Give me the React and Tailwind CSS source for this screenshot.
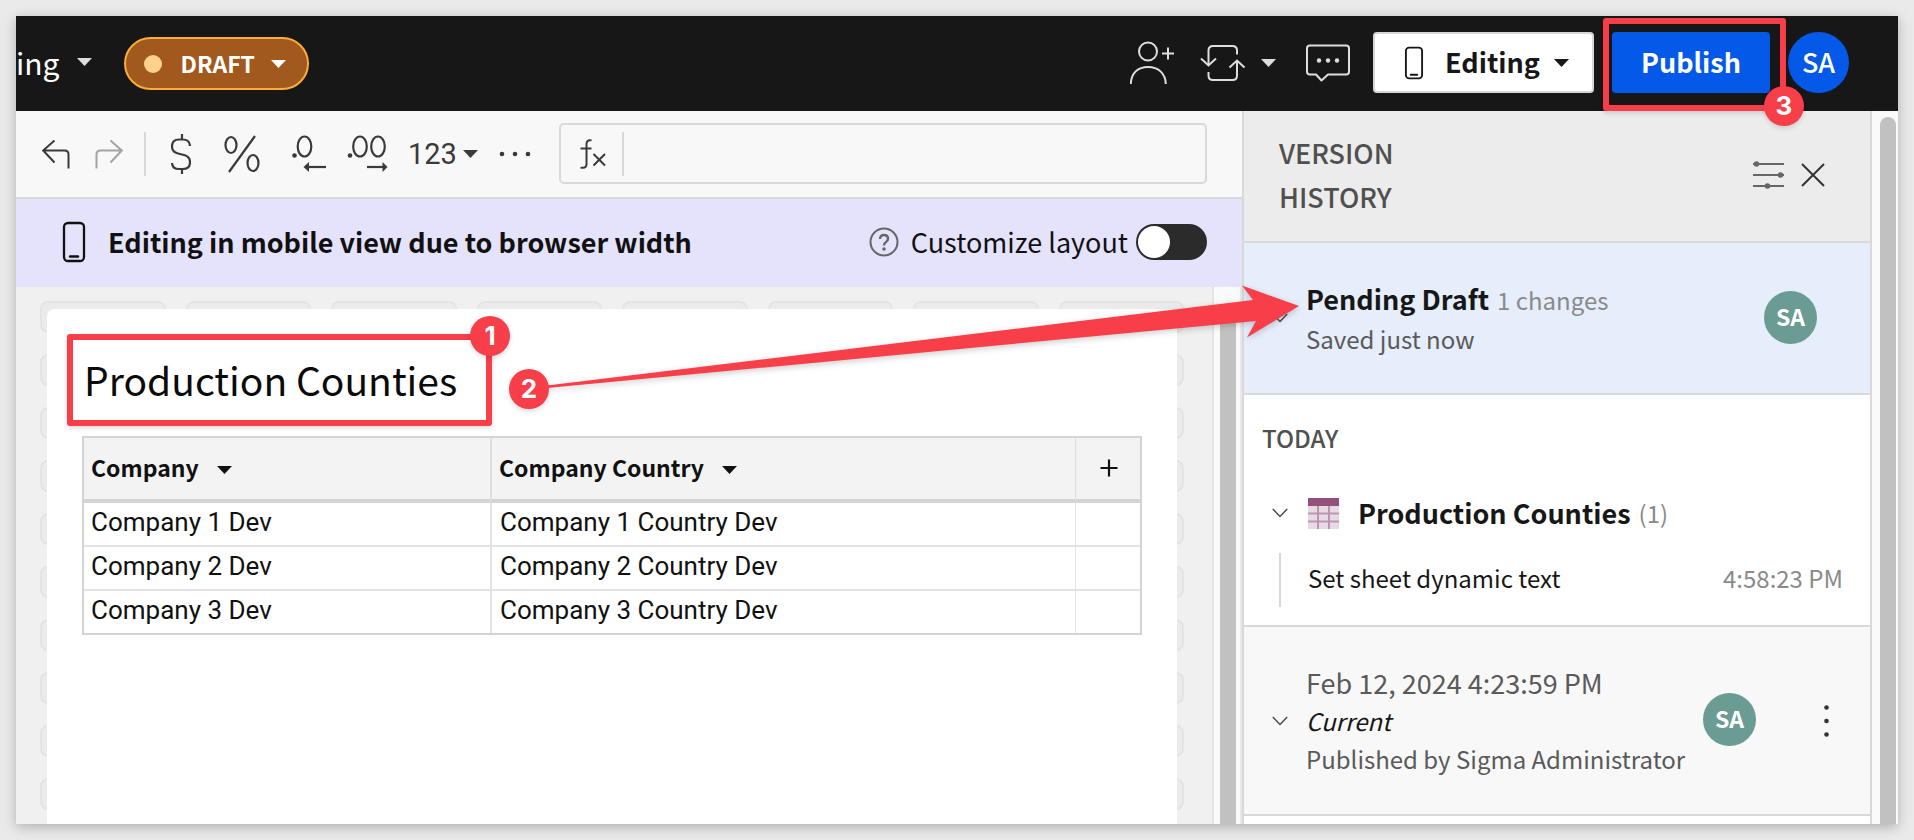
const SANS = "font-['Noto_Sans_CJK_SC','Open_Sans',sans-serif]";

const ROWS = [
  ["Company 1 Dev", "Company 1 Country Dev"],
  ["Company 2 Dev", "Company 2 Country Dev"],
  ["Company 3 Dev", "Company 3 Country Dev"],
];

function Caret({ className = "" }) {
  return (
    <svg aria-hidden="true" width="15" height="8" viewBox="0 0 15 8" className={"shrink-0 " + className}>
      <path d="M0 0h15L7.500 8z" fill="currentColor" />
    </svg>
  );
}

function Phone({ width, height, sw }) {
  return (
    <svg aria-hidden="true" width={width} height={height} viewBox="0 0 24 42" fill="none" stroke="currentColor" strokeWidth={sw} className="shrink-0">
      <rect x="2" y="2" width="20" height="38" rx="4" />
      <path d="M8 35.500h8" strokeWidth="2.400" strokeLinecap="round" />
    </svg>
  );
}

function Chevron() {
  return (
    <svg aria-hidden="true" width="16" height="10" viewBox="0 0 16 10" fill="none" stroke="#4b4b4b" strokeWidth="1.500" className="shrink-0">
      <path d="M0.800 1L8 8.500L15.200 1" />
    </svg>
  );
}

function Marker({ children, className }) {
  return (
    <span
      className={
        "absolute z-20 flex size-10 items-center justify-center rounded-full bg-[#f73e49] font-['Inter','Liberation_Sans',sans-serif] text-[26px] leading-none font-bold text-white shadow-[0_2px_5px_rgba(0,0,0,0.15)] " +
        className
      }
    >
      {children}
    </span>
  );
}

function Avatar() {
  return (
    <span className="mb-0.5 flex size-[53px] shrink-0 items-center justify-center rounded-full bg-[#6a9c93] pb-0.5 text-[23px] font-bold text-white">
      SA
    </span>
  );
}

function TopBar() {
  return (
    <header className="flex h-[95px] shrink-0 items-center bg-[#171717] pb-0.5 text-[#dedede]">
      <button type="button" className="flex items-center gap-[18px] pb-0.5 text-[30px] leading-10 text-white">
        ing
        <Caret className="text-[#dedede]" />
      </button>
      <button
        type="button"
        className="mt-0.5 ml-8 flex h-[53px] w-[185px] items-center rounded-full border-2 border-[#fbad3c] bg-[#a1591e] pl-[18px] text-[23px] font-bold text-white"
      >
        <span className="mr-[18px] size-[18px] rounded-full bg-[#ffd28c]" />
        DRAFT
        <Caret className="ml-4" />
      </button>

      <div className="ml-auto flex items-center pr-[49px]">
        <button type="button" aria-label="Share" className="mr-[26px]">
          <svg width="44" height="44" viewBox="0 0 44 44" fill="none" stroke="currentColor" strokeWidth="2">
            <circle cx="18" cy="10.500" r="9" />
            <path d="M0.800 43C1 32 8 26 18 26s17.500 6 17.800 17M38 6.500v12M32 12.500h12" />
          </svg>
        </button>
        <button type="button" aria-label="Refresh" className="flex items-center gap-[15px]">
          <svg width="46" height="38" viewBox="0 0 46 38" fill="none" stroke="currentColor" strokeWidth="2">
            <path d="M8.500 21V6.500Q8.500 2 13 2H32.500Q37 2 37 6.500V10.500" />
            <path d="M1 14.500l7.500 7l7.500-7" />
            <path d="M8.500 28V31.500Q8.500 36 13 36H32.500Q37 36 37 31.500V17" />
            <path d="M29.500 23.500l7.500-7l7.500 7" />
          </svg>
          <Caret />
        </button>
        <button type="button" aria-label="Comments" className="mr-[23px] ml-[30px]">
          <svg width="44" height="38" viewBox="0 0 44 38" fill="none" stroke="currentColor" strokeWidth="2">
            <path d="M4 1.500H40Q43 1.500 43 4.500V27.500Q43 30.500 40 30.500H22L15.500 36.500L10 30.500H4Q1 30.500 1 27.500V4.500Q1 1.500 4 1.500z" strokeLinejoin="round" />
            <g fill="currentColor" stroke="none">
              <circle cx="13" cy="16.500" r="2.200" />
              <circle cx="22" cy="16.500" r="2.200" />
              <circle cx="31" cy="16.500" r="2.200" />
            </g>
          </svg>
        </button>
        <button
          type="button"
          className="flex h-[61px] w-[221px] items-center rounded-sm border-2 border-[#d6d6d6] bg-white pl-[29px] text-[27px] font-bold text-[#171717]"
        >
          <Phone width="20" height="34" sw="2.300" />
          <span className="ml-[21px]">Editing</span>
          <Caret className="ml-3.5" />
        </button>
        <div className="relative mx-[18px]">
          <button type="button" className="h-[61px] w-[158px] rounded-sm bg-[#0559e9] text-[27px] font-bold text-white">
            Publish
          </button>
          <span className="pointer-events-none absolute -top-3.5 -right-4 -bottom-[18px] -left-[9px] z-10 rounded-[3px] border-[6px] border-[#f73e49] shadow-[0_2px_5px_rgba(0,0,0,0.15)]" />
          <Marker className="-right-[34px] -bottom-[33px]">3</Marker>
        </div>
        <button type="button" className="size-[61px] rounded-full bg-[#0559e9] text-[27px] font-medium text-white">
          SA
        </button>
      </div>
    </header>
  );
}

function Toolbar() {
  return (
    <div className="flex h-[88px] shrink-0 items-center border-b-2 border-[#d9d9d9] bg-[#f8f8f8] pr-[35px] pb-px pl-[26px] text-[#3a3a3a]">
      <button type="button" aria-label="Undo">
        <svg width="28" height="30" viewBox="0 0 28 30" fill="none" stroke="currentColor" strokeWidth="2">
          <path d="M12.500 1.500L1.200 11.500L12.500 23.500M1.200 11.500H22.500Q26.500 11.500 26.500 15.500V29.500" />
        </svg>
      </button>
      <button type="button" aria-label="Redo" className="ml-[25px] text-[#a3a3a3]">
        <svg width="28" height="30" viewBox="0 0 28 30" fill="none" stroke="currentColor" strokeWidth="2">
          <path d="M15.500 1.500L26.800 11.500L15.500 23.500M26.800 11.500H5.500Q1.500 11.500 1.500 15.500V29.500" />
        </svg>
      </button>
      <span className="ml-[21px] h-11 w-0.5 bg-[#d9d9d9]" />
      <button type="button" aria-label="Format as currency" className="ml-[25px]">
        <svg width="20" height="40" viewBox="0 0 20 40" fill="none" stroke="currentColor" strokeWidth="2.200">
          <path d="M11 0V5.500M11 35V40M19 12Q18.500 5.500 12 5.500H8Q1 5.500 1 12.500Q1 18 7 19.500L13 21Q19 22.500 19 28Q19 35 12 35H8Q1.500 35 1 29" />
        </svg>
      </button>
      <button type="button" aria-label="Format as percent" className="ml-[33px]">
        <svg width="36" height="38" viewBox="0 0 36 38" fill="none" stroke="currentColor" strokeWidth="2.200">
          <ellipse cx="7" cy="10" rx="5.500" ry="8" />
          <ellipse cx="29" cy="28" rx="5.500" ry="8" />
          <path d="M31 1L5 37" />
        </svg>
      </button>
      <button type="button" aria-label="Decrease decimal places" className="ml-8">
        <svg width="34" height="38" viewBox="0 0 34 38" fill="none" stroke="currentColor" strokeWidth="2.200">
          <ellipse cx="12.500" cy="11.500" rx="6.800" ry="10" />
          <circle cx="2.500" cy="20.500" r="2.300" fill="currentColor" stroke="none" />
          <path d="M15 32H34" />
          <path d="M11.500 32L17 27V37z" fill="currentColor" stroke="none" />
        </svg>
      </button>
      <button type="button" aria-label="Increase decimal places" className="ml-[21px]">
        <svg width="41" height="38" viewBox="0 0 41 38" fill="none" stroke="currentColor" strokeWidth="2.200">
          <ellipse cx="13" cy="11.500" rx="6.800" ry="10" />
          <ellipse cx="31" cy="11.500" rx="6.800" ry="10" />
          <circle cx="3" cy="20.500" r="2.300" fill="currentColor" stroke="none" />
          <path d="M20 32H37" />
          <path d="M40.500 32L35.500 27V37z" fill="currentColor" stroke="none" />
        </svg>
      </button>
      <button type="button" className="ml-5 flex items-center gap-1.5 font-['Roboto',sans-serif] text-[29px] leading-8">
        123
        <Caret />
      </button>
      <button type="button" aria-label="More formats" className="ml-[21px]">
        <svg width="32" height="6" viewBox="0 0 32 6" fill="currentColor">
          <circle cx="3" cy="3" r="2.300" />
          <circle cx="16" cy="3" r="2.300" />
          <circle cx="29" cy="3" r="2.300" />
        </svg>
      </button>
      <label className="ml-7 flex h-[61px] min-w-0 flex-1 items-center rounded-[5px] border-2 border-[#d9d9d9] pl-[19px]">
        <svg role="img" aria-label="Formula" width="26" height="30" viewBox="0 0 26 30" fill="none" stroke="currentColor" strokeWidth="2" className="shrink-0">
          <path d="M11.500 1.200H10Q6.500 1.200 6.500 5V25Q6.500 28.800 3 28.800H0.500M0.500 9.500H11.500M13.500 15L25 26.500M25 15L13.500 26.500" />
        </svg>
        <span className="ml-4 h-11 w-0.5 shrink-0 bg-[#d9d9d9]" />
        <input type="text" className="h-full min-w-0 flex-1 bg-transparent px-3 text-2xl outline-none" />
      </label>
    </div>
  );
}

function Banner() {
  return (
    <div className="flex h-[88px] shrink-0 items-center bg-[#e5e3fb] pr-[35px] pb-0.5 pl-[46px] text-[27px] leading-10 text-[#111]">
      <Phone width="24" height="42" sw="2.300" />
      <strong className="ml-[22px] font-bold">Editing in mobile view due to browser width</strong>
      <svg role="img" aria-label="Help" width="30" height="30" viewBox="0 0 30 30" fill="none" stroke="#666" strokeWidth="2" className="ml-auto">
        <circle cx="15" cy="15" r="13.500" />
        <path d="M11 12Q11 8 15 8T19 11.800Q19 14 16.800 15.200Q15 16.200 15 18.500" strokeWidth="2.400" />
        <circle cx="15" cy="22" r="1.800" fill="#666" stroke="none" />
      </svg>
      <label htmlFor="customize" className="ml-3">
        Customize layout
      </label>
      <input
        id="customize"
        type="checkbox"
        role="switch"
        className="ml-2 flex h-9 w-[71px] appearance-none items-center rounded-full bg-[#2b2b2b] pl-0.5 before:size-8 before:rounded-full before:bg-white checked:justify-end checked:pr-0.5"
      />
    </div>
  );
}

function Sheet() {
  const th = "h-[65px] border-b-4 border-[#d4d4d4] bg-[#f3f3f3] p-0 pb-0.5 pl-[7px] text-left font-bold";
  return (
    <table className="mx-[35px] mt-2.5 w-[calc(100%-70px)] table-fixed border-separate border-spacing-0 border-2 border-[#d4d4d4] text-[#111]">
      <colgroup>
        <col className="w-[406px]" />
        <col />
        <col className="w-[65px]" />
      </colgroup>
      <thead className="text-[23px]">
        <tr>
          <th className={th}>
            <button type="button" className="flex items-center gap-[18px]">
              Company
              <Caret className="mt-1" />
            </button>
          </th>
          <th className={th + " border-l-2 border-l-[#dedede]"}>
            <button type="button" className="flex items-center gap-[18px]">
              Company Country
              <Caret className="mt-1" />
            </button>
          </th>
          <th className={th + " border-l border-l-[#dedede]"}>
            <button type="button" aria-label="Add column" className="ml-[17px] block">
              <svg width="18" height="18" viewBox="0 0 18 18" stroke="currentColor" strokeWidth="2.200">
                <path d="M9 0.500V17.500M0.500 9H17.500" />
              </svg>
            </button>
          </th>
        </tr>
      </thead>
      <tbody className="font-['Roboto',sans-serif] text-[26px] leading-[38px] [&_tr:last-child_td]:border-b-0 [&_td]:border-b-2 [&_td]:border-[#e3e3e3]">
        {ROWS.map(([company, country]) => (
          <tr key={company}>
            <td className="p-0 pb-1 pl-[7px]">{company}</td>
            <td className="border-l-2 p-0 pb-1 pl-2">{country}</td>
            <td className="border-l p-0" />
          </tr>
        ))}
      </tbody>
    </table>
  );
}

function Canvas() {
  return (
    <div className="flex min-h-0 flex-1">
      <div className="grid min-w-0 flex-1 grid-cols-1 grid-rows-1 overflow-hidden border-r-2 border-[#e5e5e5] bg-[#f0f0f0]">
        <div className="col-start-1 row-start-1 grid auto-rows-[32px] grid-cols-8 content-start gap-x-5 gap-y-[21px] pt-3.5 pr-7 pl-6">
          {Array.from({ length: 80 }, (_, i) => (
            <span key={i} className="rounded-lg border-2 border-[#e4e4e4] bg-[#ebebeb]" />
          ))}
        </div>
        <main className="z-10 col-start-1 row-start-1 mt-[22px] mr-[35px] ml-[31px] rounded-t-lg bg-white">
          <div className="relative mt-[25px] ml-5 flex h-[92px] w-[425px] items-center pb-0.5 pl-[17px]">
            <h1 className="text-[39px] leading-[56px] whitespace-nowrap text-[#0a0a0a]">Production Counties</h1>
            <span className="pointer-events-none absolute inset-0 rounded-[3px] border-[6px] border-[#f73e49] shadow-[0_2px_5px_rgba(0,0,0,0.15)]" />
            <Marker className="-top-[18px] -right-[18px]">1</Marker>
          </div>
          <Sheet />
        </main>
      </div>
      <div className="w-7 shrink-0 border-r-2 border-[#e8e8e8] bg-[#fafafa] pt-6 pl-1.5">
        <div className="h-full w-4 rounded-t-full bg-[#c1c1c1]" />
      </div>
    </div>
  );
}

function VersionHistory() {
  return (
    <aside className="flex w-[630px] shrink-0 flex-col border-x-2 border-[#d9d9d9] bg-white">
      <div className="flex h-[132px] shrink-0 items-center border-b-2 border-[#d9d9d9] bg-[#ececec] pr-[45px] pb-0.5 pl-[35px]">
        <h2 className="w-40 text-[27px] leading-[44px] font-medium text-[#505050]">VERSION HISTORY</h2>
        <button type="button" aria-label="Filter versions" className="ml-auto">
          <svg width="31" height="28" viewBox="0 0 31 28" fill="#666" stroke="#666" strokeWidth="2">
            <path d="M0 3H31M0 14H31M0 25H31" />
            <circle cx="3.500" cy="3" r="1.800" />
            <circle cx="27.500" cy="14" r="1.800" />
            <circle cx="14.500" cy="25" r="1.800" />
          </svg>
        </button>
        <button type="button" aria-label="Close" className="ml-[17px]">
          <svg width="24" height="24" viewBox="0 0 24 24" stroke="#333" strokeWidth="2">
            <path d="M1 1L23 23M23 1L1 23" />
          </svg>
        </button>
      </div>

      <section className="flex h-[152px] shrink-0 items-center border-b-2 border-[#d9d9d9] bg-[#e6edfb] pr-[53px] pl-7">
        <Chevron />
        <div className="ml-[18px] flex-1 leading-[39px]">
          <div className="flex items-baseline gap-2">
            <h3 className="text-[27px] font-bold text-[#171717]">Pending Draft</h3>
            <span className="text-2xl leading-[39px] text-[#8a8a8a]">1 changes</span>
          </div>
          <p className="text-2xl leading-[39px] text-[#5a5a5a]">Saved just now</p>
        </div>
        <Avatar />
      </section>

      <section className="shrink-0 border-b-2 border-[#d9d9d9] pt-[27px] pb-[18px]">
        <h3 className="pl-[18px] text-2xl font-medium text-[#505050]">TODAY</h3>
        <div className="mt-[39px] flex h-10 items-center pl-7">
          <Chevron />
          <svg aria-hidden="true" width="31" height="31" viewBox="0 0 31 31" className="ml-5">
            <path fill="#e8dae3" d="M0 0h31v31H0z" />
            <path stroke="#be93b1" strokeWidth="2" d="M0 15.500H31M0 23.500H31M10 8V31M21 8V31" />
            <path fill="#92507a" d="M0 0h31v8H0z" />
          </svg>
          <h4 className="ml-[19px] text-[27px] leading-10 font-bold text-[#171717]">Production Counties</h4>
          <span className="ml-2 text-2xl text-[#8a8a8a]">(1)</span>
        </div>
        <div className="mt-5 mr-[27px] ml-[35px] flex h-[54px] items-center justify-between border-l-2 border-[#d9d9d9] pb-1 pl-[27px] text-2xl">
          <span className="text-[#171717]">Set sheet dynamic text</span>
          <time className="text-[#8a8a8a]">4:58:23 PM</time>
        </div>
      </section>

      <section className="flex h-[189px] shrink-0 items-center border-b-2 border-[#d9d9d9] bg-[#f8f8f8] pr-[41px] pl-7">
        <Chevron />
        <div className="ml-[18px] flex-1 text-2xl leading-[38px] whitespace-nowrap text-[#5a5a5a]">
          <h3 className="text-[27px] leading-[38px]">Feb 12, 2024 4:23:59 PM</h3>
          <p className="leading-[38px] text-[#171717] italic">Current</p>
          <p className="leading-[38px]">Published by Sigma Administrator</p>
        </div>
        <Avatar />
        <button type="button" aria-label="Version menu" className="ml-[68px]">
          <svg width="5" height="32" viewBox="0 0 5 32" fill="#333">
            <circle cx="2.500" cy="2.500" r="2.300" />
            <circle cx="2.500" cy="16" r="2.300" />
            <circle cx="2.500" cy="29.500" r="2.300" />
          </svg>
        </button>
      </section>
    </aside>
  );
}

export default function App() {
  return (
    <div className={"flex min-h-screen bg-[#eaeaea] p-4 " + SANS}>
      <div className="relative flex min-w-0 flex-1 flex-col bg-white shadow-[0_3px_12px_rgba(0,0,0,0.25)]">
        <TopBar />
        <div className="flex min-h-0 flex-1">
          <div className="flex min-w-0 flex-1 flex-col">
            <Toolbar />
            <Banner />
            <Canvas />
          </div>
          <VersionHistory />
          <div className="w-[26px] shrink-0 bg-[#fafafa] pt-1.5 pl-2">
            <div className="h-full w-4 rounded-t-full bg-[#c1c1c1]" />
          </div>
        </div>

        <svg
          aria-hidden="true"
          width="760"
          height="112"
          viewBox="0 0 760 112"
          className="pointer-events-none absolute top-[266px] left-[530px] z-20 drop-shadow-[0_2px_3px_rgba(0,0,0,0.2)]"
        >
          <path d="M1 103.500L707 18L696 3.500L753 24L701 55.500L710 39L1 106z" fill="#f73e49" />
        </svg>
        <Marker className="top-[353px] left-[493px]">2</Marker>
      </div>
    </div>
  );
}
